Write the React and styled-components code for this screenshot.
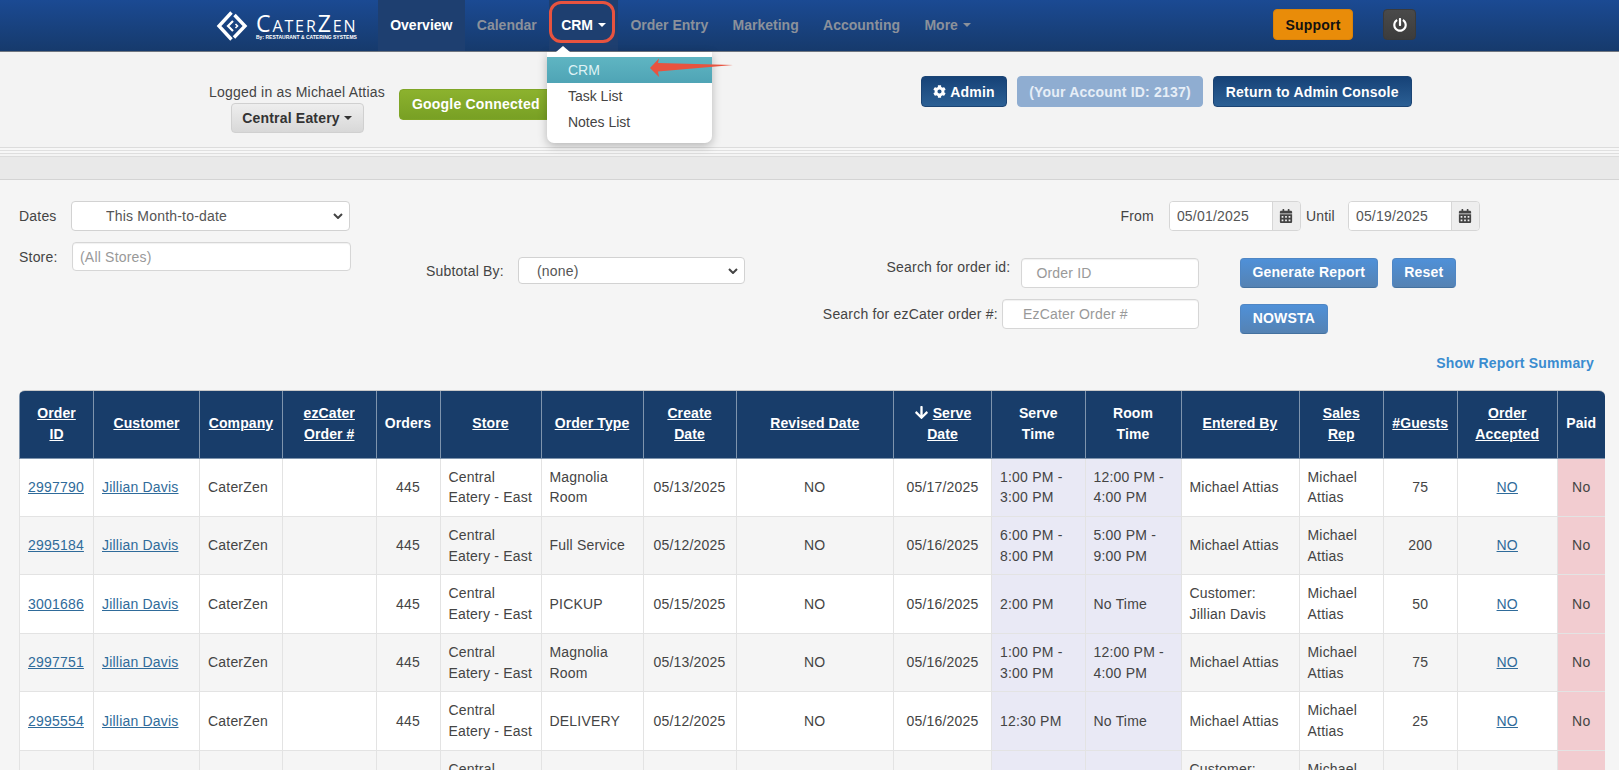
import styled, { createGlobalStyle } from "styled-components";
import { FaArrowDown, FaCalendarAlt, FaCog, FaPowerOff } from "react-icons/fa";

const GlobalStyle = createGlobalStyle`
  html, body {
    margin: 0;
    padding: 0;
    background: #f5f5f5;
    font-family: "Liberation Sans", Arial, sans-serif;
    font-size: 14px;
    letter-spacing: 0.2px;
    color: #444;
  }
  * { box-sizing: border-box; }
  button, input, select { letter-spacing: 0.2px; }
`;

const chevron =
  "data:image/svg+xml," +
  encodeURIComponent(
    '<svg xmlns="http://www.w3.org/2000/svg" width="10" height="6" viewBox="0 0 10 6"><path d="M1 1l4 4 4-4" fill="none" stroke="#444" stroke-width="2"/></svg>'
  );

const Page = styled.div`
  height: 770px;
  overflow: hidden;
`;

/* top nav */
const NavBar = styled.nav`
  height: 52px;
  display: flex;
  align-items: stretch;
  padding: 0 203px 0 216px;
  background: linear-gradient(#1b4a93, #163a6c);
  border-bottom: 1px solid #6f7680;
`;
const Logo = styled.div`
  width: 162px;
  display: flex;
  align-items: center;
  gap: 8px;
`;
const LogoText = styled.div`
  display: flex;
  flex-direction: column;
  color: #fff;
`;
const LogoName = styled.span`
  font-family: "Open Sans", sans-serif;
  font-variant: small-caps;
  font-size: 23px;
  line-height: 22px;
  letter-spacing: 1.9px;
  margin-top: 2px;
`;
const LogoSub = styled.span`
  font-size: 5px;
  line-height: 7px;
  font-weight: 700;
  letter-spacing: 0;
  white-space: nowrap;
`;
const NavItem = styled.div`
  position: relative;
  display: flex;
  align-items: center;
  gap: 5px;
  height: 51px;
  padding: 0 12.2px 2px;
  font-weight: 700;
  letter-spacing: 0;
  color: ${(p) => (p.$bright ? "#fff" : "#8b919b")};
  background: ${(p) => (p.$active ? "#1e3f70" : "transparent")};
`;
const Caret = styled.span`
  width: 0;
  height: 0;
  border-left: 4px solid transparent;
  border-right: 4px solid transparent;
  border-top: 4px solid currentColor;
`;
const NavRight = styled.div`
  margin-left: auto;
  display: flex;
  gap: 30px;
  padding-top: 9px;
`;
const SupportButton = styled.button`
  width: 80px;
  height: 31px;
  border: 1px solid #d98209;
  border-radius: 4px;
  background: #e98c09;
  font: 700 14px "Liberation Sans", sans-serif;
  color: #111;
`;
const PowerButton = styled.button`
  width: 33px;
  height: 31px;
  border: 1px solid #3a3a3a;
  border-radius: 4px;
  background: linear-gradient(#4a4a4a, #3c3c3c);
  color: #fff;
  display: flex;
  align-items: center;
  justify-content: center;
  padding: 0;
`;
const Highlight = styled.span`
  position: absolute;
  left: 0;
  top: 1px;
  width: 66px;
  height: 42px;
  border: 3px solid #e8533f;
  border-radius: 12px;
`;
const Menu = styled.div`
  position: absolute;
  left: -2px;
  top: 52px;
  width: 165px;
  height: 91px;
  padding-top: 5px;
  background: #fff;
  border-radius: 0 0 7px 7px;
  box-shadow: 0 3px 10px rgba(0, 0, 0, 0.25);
  z-index: 5;
  &::before {
    content: "";
    position: absolute;
    left: 9px;
    top: -6px;
    border-left: 7px solid transparent;
    border-right: 7px solid transparent;
    border-bottom: 6px solid #fff;
  }
`;
const MenuItem = styled.div`
  height: 26px;
  line-height: 26px;
  padding-left: 21px;
  font-weight: 400;
  color: ${(p) => (p.$active ? "#dff2f5" : "#444")};
  background: ${(p) =>
    p.$active ? "linear-gradient(#5fb5c2, #4fa4b5)" : "transparent"};
`;
const MenuArrow = styled.svg`
  position: absolute;
  left: 103px;
  top: 6px;
`;

/* account header */
const AccountBar = styled.header`
  height: 95px;
  display: flex;
  align-items: flex-start;
  padding-left: 209px;
  background: #f3f3f3;
`;
const LoggedIn = styled.div`
  width: 176px;
  padding-top: 30px;
  display: flex;
  flex-direction: column;
  align-items: center;
  gap: 1px;
  line-height: 20px;
  color: #444;
`;
const StoreButton = styled.button`
  width: 133px;
  height: 30px;
  border: 1px solid #d0d0d0;
  border-radius: 4px;
  background: linear-gradient(#eeeeee, #d8d8d8);
  font: 700 14px "Liberation Sans", sans-serif;
  color: #333;
  display: flex;
  align-items: center;
  justify-content: center;
  gap: 4px;
`;
const GoogleButton = styled.button`
  width: 170px;
  height: 31px;
  margin: 37px 0 0 14px;
  padding: 0 0 2px 12px;
  text-align: left;
  border: 1px solid #7fa526;
  border-radius: 4px;
  background: linear-gradient(#8cb22e, #78a024);
  font: 700 14px "Liberation Sans", sans-serif;
  color: #fff;
`;
const AdminGroup = styled.div`
  display: flex;
  gap: 10px;
  margin: 24px 0 0 352px;
`;
const AdminButton = styled.button`
  height: 31px;
  padding: 0;
  width: ${(p) => p.$w}px;
  border: 1px solid ${(p) => (p.$muted ? "#8fadd1" : "#1b4474")};
  border-radius: 4px;
  background: ${(p) =>
    p.$muted ? "#8fadd1" : "linear-gradient(#164277, #2b5f94)"};
  font: 700 14px "Liberation Sans", sans-serif;
  color: ${(p) => (p.$muted ? "#e6eef7" : "#fff")};
  display: flex;
  align-items: center;
  justify-content: center;
  gap: 4px;
`;
const Stripes = styled.div`
  height: 33px;
  background: #e9e9e9;
  border-top: 1px solid #dcdcdc;
  border-bottom: 1px solid #d4d4d4;
  box-shadow: inset 0 2px 0 #f7f7f7, inset 0 3px 0 #e0e0e0, inset 0 5px 0 #f7f7f7,
    inset 0 6px 0 #dedede, inset 0 8px 0 #f4f4f4, inset 0 9px 0 #dcdcdc;
`;

/* filters */
const Filters = styled.section`
  display: flex;
  align-items: flex-start;
  padding-left: 19px;
`;
const DateColumn = styled.div`
  padding-top: 21px;
  display: flex;
  flex-direction: column;
  gap: 11px;
`;
const FieldRow = styled.div`
  display: flex;
  align-items: center;
`;
const FieldLabel = styled.label`
  flex: none;
  width: ${(p) => (p.$w ? `${p.$w}px` : "auto")};
  line-height: 20px;
  color: #444;
  white-space: nowrap;
`;
const Select = styled.select`
  appearance: none;
  width: ${(p) => p.$w}px;
  height: ${(p) => p.$h}px;
  padding-left: ${(p) => p.$indent}px;
  background: #fff url("${chevron}") no-repeat right 6px center;
  border: 1px solid #d2d2d2;
  border-radius: 4px;
  font: 14px "Liberation Sans", sans-serif;
  color: #555;
`;
const TextInput = styled.input`
  width: ${(p) => p.$w}px;
  height: ${(p) => p.$h}px;
  padding: 0 0 0 ${(p) => p.$indent}px;
  background: #fff;
  border: 1px solid #d6d6d6;
  border-radius: 4px;
  box-shadow: inset 0 1px 1px rgba(0, 0, 0, 0.06);
  font: 14px "Liberation Sans", sans-serif;
  color: #555;
  &::placeholder {
    color: #999;
    opacity: 1;
  }
`;
const SubtotalColumn = styled(FieldRow)`
  margin: 77px 0 0 75px;
  gap: 14px;
`;
const RightColumn = styled.div`
  width: 656px;
  margin-left: 79px;
  padding-top: 21px;
`;
const RangeRow = styled.div`
  display: flex;
  justify-content: flex-end;
  align-items: center;
`;
const DateGroup = styled.div`
  display: flex;
  width: 132px;
  height: 30px;
  margin: ${(p) => p.$margin};
  border: 1px solid #d6d6d6;
  border-radius: 4px;
  overflow: hidden;
`;
const DateValue = styled.input`
  flex: 1;
  min-width: 0;
  padding: 0 0 0 7px;
  border: 0;
  background: #fff;
  font: 14px "Liberation Sans", sans-serif;
  color: #555;
`;
const DateAddon = styled.span`
  flex: none;
  width: 28px;
  display: flex;
  align-items: center;
  justify-content: center;
  background: #eee;
  border-left: 1px solid #d6d6d6;
  color: #444;
`;
const SearchBlock = styled.div`
  display: flex;
  margin-top: 27px;
  gap: 41px;
`;
const SearchFields = styled.div`
  width: 375px;
  display: flex;
  flex-direction: column;
  align-items: flex-end;
  gap: 11px;
`;
const SearchRow = styled.div`
  display: flex;
  align-items: ${(p) => p.$align || "flex-start"};
  gap: ${(p) => p.$gap}px;
`;
const SearchLabel = styled(FieldLabel)`
  margin-top: -1px;
`;
const ActionColumn = styled.div`
  display: flex;
  flex-direction: column;
  align-items: flex-start;
  gap: 16px;
`;
const ActionRow = styled.div`
  display: flex;
  gap: 14px;
`;
const ActionButton = styled.button`
  width: ${(p) => p.$w}px;
  height: 30px;
  padding: 0 0 2px;
  border: 1px solid #4f86c4;
  border-bottom-color: #44719f;
  border-radius: 4px;
  background: linear-gradient(#4f90d8, #5582b3);
  font: 700 14px "Liberation Sans", sans-serif;
  color: #fff;
`;
const SummaryRow = styled.div`
  display: flex;
  justify-content: flex-end;
  padding-right: 25px;
  margin-top: 19px;
`;
const SummaryLink = styled.a`
  font-weight: 700;
  line-height: 20px;
  letter-spacing: 0.2px;
  color: #3a8cd0;
`;

/* report table */
const TableWrap = styled.div`
  width: 1586px;
  margin: 17px 0 0 19px;
  border-radius: 6px 6px 0 0;
  border-top: 1px solid #c9c9c9;
  overflow: hidden;
`;
const Report = styled.table`
  width: 1586px;
  table-layout: fixed;
  border-collapse: collapse;
  line-height: 20.7px;
`;
const HeadCell = styled.th`
  padding: 12px 4px 13.2px;
  background: #183d6a;
  border: 1px solid #7e94ad;
  border-top: 0;
  font-weight: 700;
  letter-spacing: 0.1px;
  color: #fff;
  text-align: center;
  white-space: nowrap;
`;
const SortLink = styled.a`
  color: #fff;
  text-decoration: underline;
`;
const SortIcon = styled(FaArrowDown)`
  font-size: 15px;
  vertical-align: -2px;
  margin-right: 4px;
`;
const Row = styled.tr`
  background: ${(p) => (p.$odd ? "#f5f5f5" : "#fff")};
`;
const Cell = styled.td`
  padding: 8px;
  border: 1px solid #e3e3e3;
  color: #444;
  vertical-align: ${(p) => (p.$top ? "top" : "middle")};
  text-align: ${(p) => (p.$center ? "center" : "left")};
  background: ${(p) => p.$bg || "transparent"};
`;
const RowLink = styled.a`
  color: #2f6b9a;
  text-decoration: underline;
`;

const colWidths = [74, 106, 83, 93.5, 64, 101, 102, 93, 157.5, 98, 93.5, 96, 118, 84.5, 73.5, 100.5, 47.5];

const headers = [
  { lines: ["Order", "ID"], sort: true },
  { lines: ["Customer"], sort: true },
  { lines: ["Company"], sort: true },
  { lines: ["ezCater", "Order #"], sort: true },
  { lines: ["Orders"] },
  { lines: ["Store"], sort: true },
  { lines: ["Order Type"], sort: true },
  { lines: ["Create", "Date"], sort: true },
  { lines: ["Revised Date"], sort: true },
  { lines: ["Serve", "Date"], sort: true, icon: true },
  { lines: ["Serve", "Time"] },
  { lines: ["Room", "Time"] },
  { lines: ["Entered By"], sort: true },
  { lines: ["Sales", "Rep"], sort: true },
  { lines: ["#Guests"], sort: true },
  { lines: ["Order", "Accepted"], sort: true },
  { lines: ["Paid"] },
];

const orders = [
  { id: "2997790", type: "Magnolia Room", created: "05/13/2025", serve: "05/17/2025", time: "1:00 PM - 3:00 PM", room: "12:00 PM - 4:00 PM", by: "Michael Attias", guests: 75 },
  { id: "2995184", type: "Full Service", created: "05/12/2025", serve: "05/16/2025", time: "6:00 PM - 8:00 PM", room: "5:00 PM - 9:00 PM", by: "Michael Attias", guests: 200 },
  { id: "3001686", type: "PICKUP", created: "05/15/2025", serve: "05/16/2025", time: "2:00 PM", room: "No Time", by: "Customer: Jillian Davis", guests: 50 },
  { id: "2997751", type: "Magnolia Room", created: "05/13/2025", serve: "05/16/2025", time: "1:00 PM - 3:00 PM", room: "12:00 PM - 4:00 PM", by: "Michael Attias", guests: 75 },
  { id: "2995554", type: "DELIVERY", created: "05/12/2025", serve: "05/16/2025", time: "12:30 PM", room: "No Time", by: "Michael Attias", guests: 25 },
];

const LAVENDER = "#e9e9f5";
const PINK = "#f2ccd0";

function HeaderCell({ lines, sort, icon }) {
  return (
    <HeadCell>
      {lines.map((line, i) => (
        <div key={line}>
          {icon && i === 0 && <SortIcon />}
          {sort ? <SortLink>{line}</SortLink> : line}
        </div>
      ))}
    </HeadCell>
  );
}

function OrderRow({ order, odd }) {
  return (
    <Row $odd={odd}>
      <Cell><RowLink>{order.id}</RowLink></Cell>
      <Cell><RowLink>Jillian Davis</RowLink></Cell>
      <Cell>CaterZen</Cell>
      <Cell />
      <Cell $center>445</Cell>
      <Cell>Central Eatery - East</Cell>
      <Cell>{order.type}</Cell>
      <Cell $center>{order.created}</Cell>
      <Cell $center>NO</Cell>
      <Cell $center>{order.serve}</Cell>
      <Cell $bg={LAVENDER}>{order.time}</Cell>
      <Cell $bg={LAVENDER}>{order.room}</Cell>
      <Cell>{order.by}</Cell>
      <Cell>Michael Attias</Cell>
      <Cell $center>{order.guests}</Cell>
      <Cell $center><RowLink>NO</RowLink></Cell>
      <Cell $center $bg={PINK}>No</Cell>
    </Row>
  );
}

function DateField({ value, margin }) {
  return (
    <DateGroup $margin={margin}>
      <DateValue defaultValue={value} />
      <DateAddon><FaCalendarAlt size={14} /></DateAddon>
    </DateGroup>
  );
}

export default function App() {
  return (
    <Page>
      <GlobalStyle />
      <NavBar>
        <Logo>
          <svg width="32" height="32" viewBox="0 0 32 32" fill="none" stroke="#fff" strokeWidth="3.4">
            <path d="M15.5 2.5 L3 16 L15.5 29.5" />
            <path d="M18.5 5 L29 16 L18 27.5" />
            <path d="M17 11 L12 16 L17 21" strokeWidth="2.2" />
            <path d="M19.5 14 L21.5 16 L19.5 18" strokeWidth="1.6" />
          </svg>
          <LogoText>
            <LogoName>CaterZen</LogoName>
            <LogoSub>By: RESTAURANT &amp; CATERING SYSTEMS</LogoSub>
          </LogoText>
        </Logo>
        <NavItem $bright $active>Overview</NavItem>
        <NavItem>Calendar</NavItem>
        <NavItem $bright $active>
          CRM <Caret />
          <Highlight />
          <Menu>
            <MenuItem $active>CRM</MenuItem>
            <MenuItem>Task List</MenuItem>
            <MenuItem>Notes List</MenuItem>
            <MenuArrow width="84" height="20" viewBox="0 0 84 20">
              <polygon points="0,10 9,0.5 8,5 83,7 8,13.5 9,19" fill="#e8533f" />
            </MenuArrow>
          </Menu>
        </NavItem>
        <NavItem>Order Entry</NavItem>
        <NavItem>Marketing</NavItem>
        <NavItem>Accounting</NavItem>
        <NavItem>More <Caret /></NavItem>
        <NavRight>
          <SupportButton>Support</SupportButton>
          <PowerButton><FaPowerOff size={14} /></PowerButton>
        </NavRight>
      </NavBar>

      <AccountBar>
        <LoggedIn>
          Logged in as Michael Attias
          <StoreButton>Central Eatery <Caret /></StoreButton>
        </LoggedIn>
        <GoogleButton>Google Connected</GoogleButton>
        <AdminGroup>
          <AdminButton $w={86}><FaCog size={13} /> Admin</AdminButton>
          <AdminButton $w={186} $muted>(Your Account ID: 2137)</AdminButton>
          <AdminButton $w={198.5}>Return to Admin Console</AdminButton>
        </AdminGroup>
      </AccountBar>
      <Stripes />

      <Filters>
        <DateColumn>
          <FieldRow>
            <FieldLabel $w={52}>Dates</FieldLabel>
            <Select $w={279} $h={30} $indent={34} defaultValue="month">
              <option value="month">This Month-to-date</option>
            </Select>
          </FieldRow>
          <FieldRow>
            <FieldLabel $w={53}>Store:</FieldLabel>
            <TextInput $w={279} $h={29} $indent={7} placeholder="(All Stores)" />
          </FieldRow>
        </DateColumn>
        <SubtotalColumn>
          <FieldLabel>Subtotal By:</FieldLabel>
          <Select $w={227} $h={27} $indent={18} defaultValue="none">
            <option value="none">(none)</option>
          </Select>
        </SubtotalColumn>
        <RightColumn>
          <RangeRow>
            <FieldLabel>From</FieldLabel>
            <DateField value="05/01/2025" margin="0 5px 0 15px" />
            <FieldLabel>Until</FieldLabel>
            <DateField value="05/19/2025" margin="0 0 0 13px" />
          </RangeRow>
          <SearchBlock>
            <SearchFields>
              <SearchRow $gap={11}>
                <SearchLabel>Search for order id:</SearchLabel>
                <TextInput $w={177.5} $h={30} $indent={14} placeholder="Order ID" />
              </SearchRow>
              <SearchRow $gap={4} $align="center">
                <FieldLabel>Search for ezCater order #:</FieldLabel>
                <TextInput $w={197} $h={30} $indent={20} placeholder="EzCater Order #" />
              </SearchRow>
            </SearchFields>
            <ActionColumn>
              <ActionRow>
                <ActionButton $w={138}>Generate Report</ActionButton>
                <ActionButton $w={64}>Reset</ActionButton>
              </ActionRow>
              <ActionButton $w={88}>NOWSTA</ActionButton>
            </ActionColumn>
          </SearchBlock>
        </RightColumn>
      </Filters>

      <SummaryRow>
        <SummaryLink>Show Report Summary</SummaryLink>
      </SummaryRow>

      <TableWrap>
        <Report>
          <colgroup>
            {colWidths.map((w, i) => (
              <col key={i} width={w} />
            ))}
          </colgroup>
          <thead>
            <tr>
              {headers.map((h) => (
                <HeaderCell key={h.lines.join(" ")} {...h} />
              ))}
            </tr>
          </thead>
          <tbody>
            {orders.map((order, i) => (
              <OrderRow key={order.id} order={order} odd={i % 2 === 1} />
            ))}
            <Row $odd>
              <Cell /><Cell /><Cell /><Cell /><Cell />
              <Cell $top>Central Eatery - East</Cell>
              <Cell /><Cell /><Cell /><Cell />
              <Cell $bg={LAVENDER} />
              <Cell $bg={LAVENDER} />
              <Cell $top>Customer: Jillian Davis</Cell>
              <Cell $top>Michael Attias</Cell>
              <Cell /><Cell />
              <Cell $bg={PINK} />
            </Row>
          </tbody>
        </Report>
      </TableWrap>
    </Page>
  );
}
